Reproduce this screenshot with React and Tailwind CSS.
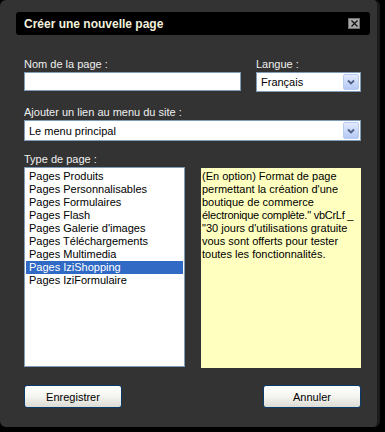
const pageTypes = [
  'Pages Produits',
  'Pages Personnalisables',
  'Pages Formulaires',
  'Pages Flash',
  "Pages Galerie d'images",
  'Pages Téléchargements',
  'Pages Multimedia',
  'Pages IziShopping',
  'Pages IziFormulaire',
];

const Chevron = () => (
  <div className="flex h-full w-[16px] items-center justify-center rounded-[2px] border border-[#b8cbf0] bg-gradient-to-b from-[#e2ebfe] to-[#b5c9f6]">
    <svg width="8" height="6" viewBox="0 0 8 6">
      <path d="M1 1.5 L4 4.5 L7 1.5" fill="none" stroke="#4d6185" strokeWidth="1.8" />
    </svg>
  </div>
);

const Select = ({ value, className }) => (
  <div className={`flex items-center bg-white border border-[#7f9db9] p-[1px] ${className}`}>
    <span className="flex-1 pl-[3px] text-[11px] leading-[14px] text-black">{value}</span>
    <Chevron />
  </div>
);

const Button = ({ children }) => (
  <button className="h-[23px] w-[98px] rounded-[3px] border border-[#0a3a6a] bg-gradient-to-b from-[#ffffff] via-[#f4f4f0] to-[#dcdcd4] text-[11px] text-black">
    {children}
  </button>
);

export default function App() {
  return (
    <div
      className="h-[432px] w-[385px] bg-black"
      style={{ fontFamily: '"Liberation Sans", Arial, sans-serif' }}
    >
      <div className="flex h-[427px] w-[380px] flex-col rounded-[6px] border-r-[3px] border-[#1c1c1c] bg-[#333333] pl-4 pr-[7px] pt-3">
        <div className="flex h-[23px] items-center rounded-[3px] bg-black pl-2 pr-[10px]">
          <span className="flex-1 text-[12px] font-bold text-[#f2f0dc]">Créer une nouvelle page</span>
          <div className="flex h-[11px] w-[12px] items-center justify-center border border-[#707070] bg-[#a8a8a8]">
            <svg width="7" height="7" viewBox="0 0 7 7">
              <path d="M0.5 0.5 L6.5 6.5 M6.5 0.5 L0.5 6.5" stroke="#111" strokeWidth="1.3" />
            </svg>
          </div>
        </div>

        <div className="pl-2 pr-[9px] text-[11px] leading-[14px] text-[#f0f0f0]">
          <div className="mt-[22px] flex gap-[15px]">
            <div className="w-[217px]">
              <div>Nom de la page :</div>
              <div className="mt-[1px] h-[19px] border border-[#7f9db9] bg-white" />
            </div>
            <div className="flex-1">
              <div>Langue :</div>
              <Select value="Français" className="mt-[1px] h-[20px]" />
            </div>
          </div>

          <div className="mt-[13px]">Ajouter un lien au menu du site :</div>
          <Select value="Le menu principal" className="mt-[1px] h-[21px]" />

          <div className="mt-[11px]">Type de page :</div>
          <div className="mt-[1px] flex items-start gap-[16px]">
            <div className="h-[200px] w-[161px] shrink-0 border border-[#7f9db9] bg-white px-[1px] pt-[2px]">
              {pageTypes.map((t) => (
                <div
                  key={t}
                  className={`h-[13px] pl-[3px] text-[11px] leading-[13px] ${
                    t === 'Pages IziShopping' ? 'bg-[#316ac5] text-white' : 'text-black'
                  }`}
                >
                  {t}
                </div>
              ))}
            </div>
            <div className="mt-[1px] h-[200px] w-[160px] shrink-0 whitespace-nowrap bg-[#ffffc0] pl-[1px] pt-[2px] text-[11px] leading-[13px] text-black">
              <div>(En option) Format de page</div>
              <div>permettant la création d'une</div>
              <div>boutique de commerce</div>
              <div className="tracking-[-0.25px]">électronique complète." vbCrLf _</div>
              <div>"30 jours d'utilisations gratuite</div>
              <div>vous sont offerts pour tester</div>
              <div>toutes les fonctionnalités.</div>
            </div>
          </div>

          <div className="mt-[17px] flex justify-between">
            <Button>Enregistrer</Button>
            <Button>Annuler</Button>
          </div>
        </div>
      </div>
    </div>
  );
}
